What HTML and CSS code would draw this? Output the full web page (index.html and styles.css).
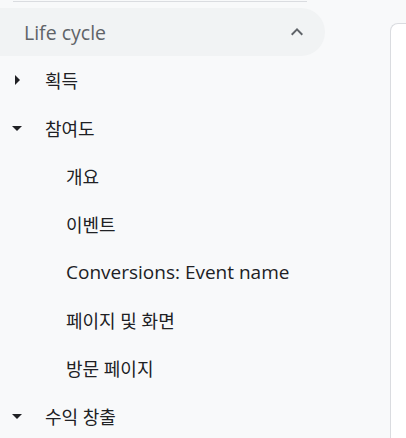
FILE: index.html
```html
<!DOCTYPE html>
<html lang="ko">
<head>
    <meta charset="UTF-8">
    <meta name="viewport" content="width=device-width, initial-scale=1.0">
    <title>Life cycle</title>
    <link rel="stylesheet" href="styles.css">
</head>
<body>
    <div class="page">
        <nav class="nav">
            <div class="divider"></div>
            <div class="section">
                <span>Life cycle</span>
                <svg class="chevron" width="24" height="24" viewBox="0 0 24 24">
                    <path d="M7.41 15.41 12 10.83l4.59 4.58L18 14l-6-6-6 6z" fill="#5f6368"/>
                </svg>
            </div>
            <div class="item top">
                <svg class="caret" width="24" height="24" viewBox="0 0 24 24"><path d="M10 17l5-5-5-5z" fill="#202124"/></svg>
                <span>획득</span>
            </div>
            <div class="item top">
                <svg class="caret" width="24" height="24" viewBox="0 0 24 24"><path d="M7 10l5 5 5-5z" fill="#202124"/></svg>
                <span>참여도</span>
            </div>
            <div class="item sub">개요</div>
            <div class="item sub">이벤트</div>
            <div class="item sub latin">Conversions: Event name</div>
            <div class="item sub">페이지 및 화면</div>
            <div class="item sub">방문 페이지</div>
            <div class="item top">
                <svg class="caret" width="24" height="24" viewBox="0 0 24 24"><path d="M7 10l5 5 5-5z" fill="#202124"/></svg>
                <span>수익 창출</span>
            </div>
        </nav>
        <div class="content"></div>
    </div>
</body>
</html>
```
FILE: styles.css
```css
    body {
        margin: 0;
        background-color: #f8f9fa;
        font-family: "Open Sans", "Noto Sans CJK KR", sans-serif;
        overflow: hidden;
    }

    .page {
        display: flex;
        height: 438px;
    }

    .nav {
        width: 325px;
        flex: none;
    }

    .divider {
        height: 1px;
        margin: 1px 18px 6px 13px;
        background-color: #dadce0;
    }

    .section {
        height: 48px;
        display: flex;
        align-items: center;
        justify-content: space-between;
        padding: 0 16px 0 24px;
        background-color: #f1f3f4;
        border-radius: 0 24px 24px 0;
        font-size: 19.5px;
        color: #5f6368;
    }

    .item {
        height: 48px;
        display: flex;
        align-items: center;
        font-size: 18px;
        color: #202124;
    }

    .item.latin {
        font-size: 19px;
    }

    .item.top {
        padding-left: 5px;
    }

    .caret {
        margin-right: 16px;
    }

    .item.sub {
        padding-left: 66px;
    }

    .content {
        flex: 1;
        margin: 23px 0 0 65px;
        background-color: #fff;
        border: 1px solid #dadce0;
        border-right: none;
        border-bottom: none;
        border-radius: 8px 0 0 0;
    }
```
